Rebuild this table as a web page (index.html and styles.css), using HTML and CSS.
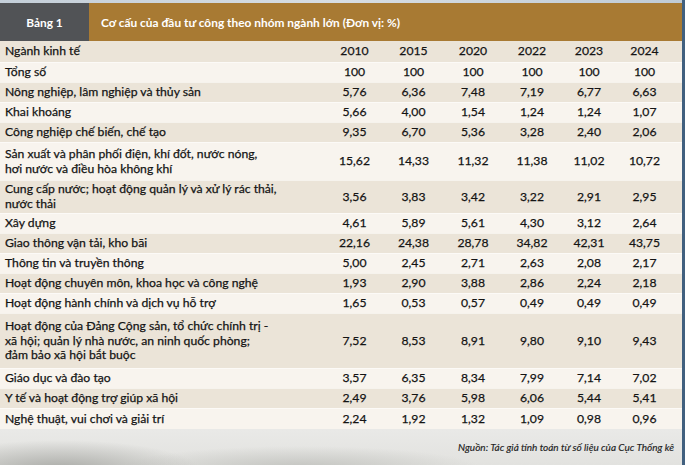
FILE: index.html
```html
<!DOCTYPE html>
<html lang="vi">
<head>
<meta charset="utf-8">
<title>Bảng 1</title>
<link rel="stylesheet" href="styles.css">
</head>
<body>
<div class="page">
  <div class="sky"></div>
  <div class="table">
    <div class="caption">
      <div class="tag">Bảng 1</div>
      <div class="title">Cơ cấu của đầu tư công theo nhóm ngành lớn (Đơn vị: %)</div>
    </div>
    <div class="row head dark"><div class="label">Ngành kinh tế</div><div>2010</div><div>2015</div><div>2020</div><div>2022</div><div>2023</div><div>2024</div></div>
    <div class="row light"><div class="label">Tổng số</div><div>100</div><div>100</div><div>100</div><div>100</div><div>100</div><div>100</div></div>
    <div class="row dark"><div class="label">Nông nghiệp, lâm nghiệp và thủy sản</div><div>5,76</div><div>6,36</div><div>7,48</div><div>7,19</div><div>6,77</div><div>6,63</div></div>
    <div class="row light"><div class="label">Khai khoáng</div><div>5,66</div><div>4,00</div><div>1,54</div><div>1,24</div><div>1,24</div><div>1,07</div></div>
    <div class="row dark"><div class="label">Công nghiệp chế biến, chế tạo</div><div>9,35</div><div>6,70</div><div>5,36</div><div>3,28</div><div>2,40</div><div>2,06</div></div>
    <div class="row light tall2"><div class="label">Sản xuất và phân phối điện, khí đốt, nước nóng,<br>hơi nước và điều hòa không khí</div><div>15,62</div><div>14,33</div><div>11,32</div><div>11,38</div><div>11,02</div><div>10,72</div></div>
    <div class="row dark tall2b"><div class="label">Cung cấp nước; hoạt động quản lý và xử lý rác thải,<br>nước thải</div><div>3,56</div><div>3,83</div><div>3,42</div><div>3,22</div><div>2,91</div><div>2,95</div></div>
    <div class="row light"><div class="label">Xây dựng</div><div>4,61</div><div>5,89</div><div>5,61</div><div>4,30</div><div>3,12</div><div>2,64</div></div>
    <div class="row dark"><div class="label">Giao thông vận tải, kho bãi</div><div>22,16</div><div>24,38</div><div>28,78</div><div>34,82</div><div>42,31</div><div>43,75</div></div>
    <div class="row light"><div class="label">Thông tin và truyền thông</div><div>5,00</div><div>2,45</div><div>2,71</div><div>2,63</div><div>2,08</div><div>2,17</div></div>
    <div class="row dark"><div class="label">Hoạt động chuyên môn, khoa học và công nghệ</div><div>1,93</div><div>2,90</div><div>3,88</div><div>2,86</div><div>2,24</div><div>2,18</div></div>
    <div class="row light"><div class="label">Hoạt động hành chính và dịch vụ hỗ trợ</div><div>1,65</div><div>0,53</div><div>0,57</div><div>0,49</div><div>0,49</div><div>0,49</div></div>
    <div class="row dark tall3"><div class="label">Hoạt động của Đảng Cộng sản, tổ chức chính trị -<br>xã hội; quản lý nhà nước, an ninh quốc phòng;<br>đảm bảo xã hội bắt buộc</div><div>7,52</div><div>8,53</div><div>8,91</div><div>9,80</div><div>9,10</div><div>9,43</div></div>
    <div class="row light"><div class="label">Giáo dục và đào tạo</div><div>3,57</div><div>6,35</div><div>8,34</div><div>7,99</div><div>7,14</div><div>7,02</div></div>
    <div class="row dark"><div class="label">Y tế và hoạt động trợ giúp xã hội</div><div>2,49</div><div>3,76</div><div>5,98</div><div>6,06</div><div>5,44</div><div>5,41</div></div>
    <div class="row light last"><div class="label">Nghệ thuật, vui chơi và giải trí</div><div>2,24</div><div>1,92</div><div>1,32</div><div>1,09</div><div>0,98</div><div>0,96</div></div>
  </div>
  <div class="source">Nguồn: Tác giả tính toán từ số liệu của Cục Thống kê</div>
</div>
</body>
</html>
```

FILE: styles.css
```css
* { box-sizing: border-box; }

html, body {
  margin: 0;
  padding: 0;
}

body {
  width: 685px;
  height: 465px;
  overflow: hidden;
  font-family: Lato, "Noto Sans", sans-serif;
  color: #141414;
  background:
    radial-gradient(ellipse 140px 30px at 60px 470px, #a9aaa6 0%, rgba(169,170,166,0) 100%),
    radial-gradient(ellipse 180px 22px at 300px 468px, #c3c4c0 0%, rgba(195,196,192,0) 100%),
    linear-gradient(to right, rgba(0,0,0,0) 682px, #41607f 682px),
    linear-gradient(to bottom, #c7d3de 0px, #dfe3e6 40px, #e9e9e7 430px, #e2e2df 465px);
}

.page {
  width: 685px;
  height: 465px;
  display: flex;
  flex-direction: column;
}

.sky {
  height: 3px;
  width: 682px;
  background: linear-gradient(to right, #c4cfd9, #d7dde2 50%, #bfcbd6);
}

.table {
  width: 682px;
  display: flex;
  flex-direction: column;
}

.caption {
  display: flex;
  height: 38px;
  color: #ffffff;
  font-weight: 700;
  font-size: 11.9px;
}

.tag {
  width: 89px;
  background: #515356;
  display: flex;
  align-items: center;
  justify-content: center;
}

.title {
  flex: 1;
  background: #a87a33;
  display: flex;
  align-items: center;
  padding-left: 12px;
}

.row {
  display: grid;
  grid-template-columns: 325px 59px 59px 60px 58px 56px 55px;
  padding-right: 10px;
  height: 20px;
  align-items: center;
  font-size: 12.2px;
  line-height: 14.8px;
  -webkit-text-stroke: 0.25px #141414;
  border-top: 1px solid rgba(255, 255, 255, 0.55);
}

.row > div {
  text-align: center;
}

.row > .label {
  text-align: left;
  padding-left: 5px;
}

.row.head { height: 21px; border-top: none; }
.row.tall2 { height: 38px; }
.row.tall2b { height: 33px; }
.row.tall3 { height: 55px; }
.row.last { height: 21px; }

.dark { background: #ebe4d8; }
.light { background: #f8f4ee; }

.source {
  width: 682px;
  text-align: right;
  padding-right: 8px;
  margin-top: 12px;
  font-family: "Liberation Sans Narrow", Lato, sans-serif;
  font-style: italic;
  font-size: 10px;
  color: #222222;
  -webkit-text-stroke: 0.15px #222222;
}
```
